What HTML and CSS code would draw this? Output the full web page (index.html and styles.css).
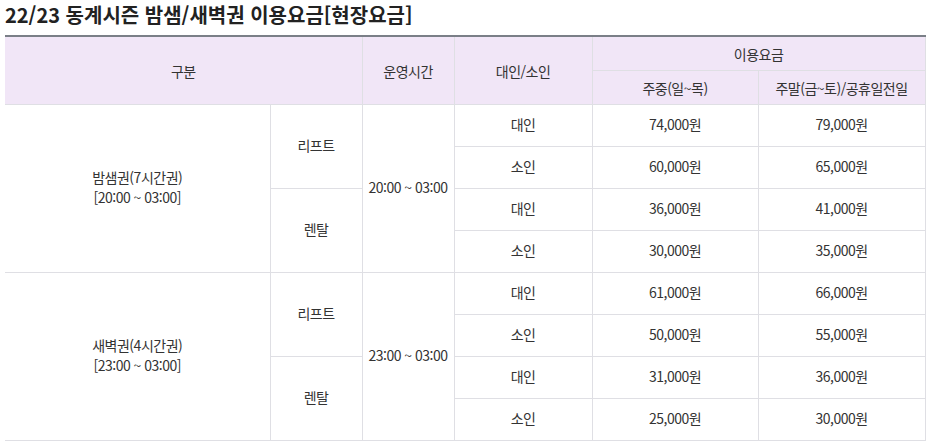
FILE: index.html
```html
<!DOCTYPE html>
<html lang="ko">
<head>
<meta charset="utf-8">
<link rel="stylesheet" href="styles.css">
</head>
<body>
<h2 class="title">22/23 동계시즌 밤샘/새벽권 이용요금[현장요금]</h2>
<table class="price">
  <colgroup>
    <col class="c1"><col class="c2"><col class="c3"><col class="c4"><col class="c5"><col class="c6">
  </colgroup>
  <thead>
    <tr class="h1">
      <th colspan="2" rowspan="2">구분</th>
      <th rowspan="2">운영시간</th>
      <th rowspan="2">대인/소인</th>
      <th colspan="2">이용요금</th>
    </tr>
    <tr class="h2">
      <th>주중(일~목)</th>
      <th>주말(금~토)/공휴일전일</th>
    </tr>
  </thead>
  <tbody>
    <tr>
      <td rowspan="4">밤샘권(7시간권)<br>[20:00 ~ 03:00]</td>
      <td rowspan="2">리프트</td>
      <td rowspan="4">20:00 ~ 03:00</td>
      <td>대인</td><td>74,000원</td><td>79,000원</td>
    </tr>
    <tr><td>소인</td><td>60,000원</td><td>65,000원</td></tr>
    <tr>
      <td rowspan="2">렌탈</td>
      <td>대인</td><td>36,000원</td><td>41,000원</td>
    </tr>
    <tr><td>소인</td><td>30,000원</td><td>35,000원</td></tr>
    <tr>
      <td rowspan="4">새벽권(4시간권)<br>[23:00 ~ 03:00]</td>
      <td rowspan="2">리프트</td>
      <td rowspan="4">23:00 ~ 03:00</td>
      <td>대인</td><td>61,000원</td><td>66,000원</td>
    </tr>
    <tr><td>소인</td><td>50,000원</td><td>55,000원</td></tr>
    <tr>
      <td rowspan="2">렌탈</td>
      <td>대인</td><td>31,000원</td><td>36,000원</td>
    </tr>
    <tr><td>소인</td><td>25,000원</td><td>30,000원</td></tr>
  </tbody>
</table>
</body>
</html>
```
FILE: styles.css
```css
html, body {
  margin: 0;
  padding: 0;
  background: #ffffff;
}
body {
  padding: 0 8px 0 5px;
  font-family: "Noto Sans CJK KR", "Noto Sans", sans-serif;
  color: #333333;
}
.title {
  margin: 0;
  height: 34px;
  padding-top: 1px;
  font-size: 20px;
  line-height: 28px;
  font-weight: 700;
  color: #222222;
  letter-spacing: 0;
}
.price {
  width: 920px;
  border-collapse: collapse;
  table-layout: fixed;
  border-top: 2px solid #7a7f87;
  font-size: 14px;
  letter-spacing: -0.5px;
}
.c1 { width: 265px; }
.c2 { width: 92px; }
.c3 { width: 92px; }
.c4 { width: 138px; }
.c5 { width: 166px; }
.c6 { width: 167px; }
.price th,
.price td {
  border: 1px solid #dfdfe4;
  text-align: center;
  vertical-align: middle;
  padding: 0;
  font-weight: 400;
  line-height: 20px;
}
.price th {
  background: #f1e6f7;
  color: #333333;
  font-size: 14px;
}
.price tr:first-child th { border-top: 0; }
.price th:first-child,
.price td:first-child { border-left: 0; }
.price .h1 th { height: 33px; }
.price .h2 th { height: 33px; }
.price tbody tr { height: 42px; }
.price td {
  height: 37px;
  padding-bottom: 4px;
}
```
